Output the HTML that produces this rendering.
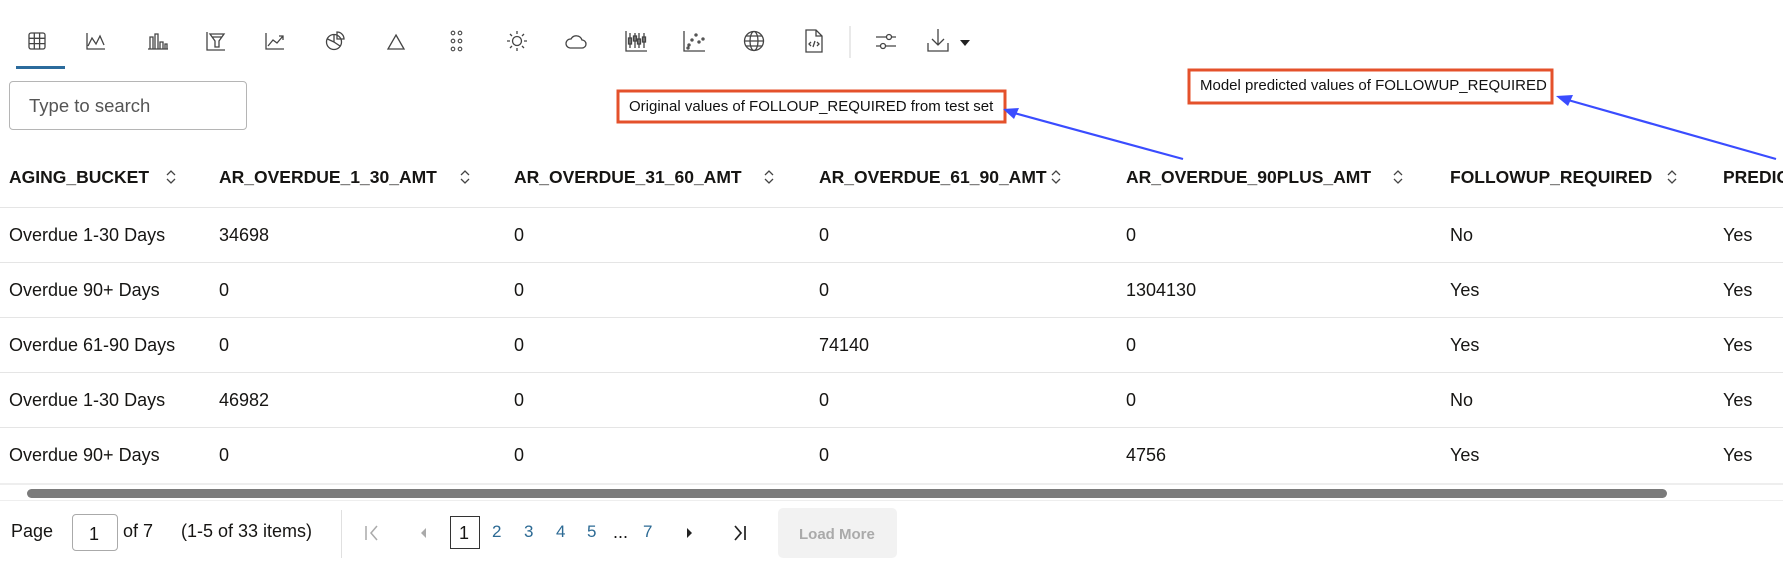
<!DOCTYPE html>
<html><head><meta charset="utf-8"><style>
*{margin:0;padding:0;box-sizing:border-box}
body{width:1783px;height:577px;background:#fff;font-family:"Liberation Sans",sans-serif;color:#161513;position:relative;overflow:hidden}
.a{position:absolute;white-space:nowrap}
.h{font-weight:bold;font-size:17.5px;top:167px}
.c{font-size:18px}
.s{position:absolute;top:169px;width:10px;height:16px}
.line{position:absolute;left:0;width:1783px;height:1px;background:#e5e5e5}
.pg{font-size:17px;top:522px;color:#2c6a94}
</style></head><body>
<svg style="position:absolute;left:0;top:0" width="1783" height="577" fill="none" stroke="#444" stroke-width="1.3">
<g transform="translate(29,33)"><rect x="0" y="0" width="16" height="16" rx="2"/><path d="M5.3 0v16M10.6 0v16M0 5.3h16M0 10.6h16"/></g>
<g transform="translate(87,33)"><path d="M0 0v16h18M1 13l4-8 4 6 4-8 4 9"/></g>
<g transform="translate(148,33)"><path d="M0 16h20M2 16V4h3v12M7 16V1h3v15M12 16V9h3v7M17 16v-5h2v5"/></g>
<g transform="translate(207,32)"><path d="M0 0v18h18M3 2h14l-5 7v6h-4V9z M5 5h10"/></g>
<g transform="translate(266,33)"><path d="M0 0v16h18M2 13l5-6 4 3 6-7M13 3h4v4"/></g>
<g transform="translate(326,32)"><circle cx="8" cy="10" r="7.5"/><path d="M8 2.5V10l6 4M8 10L1.5 7M11 0a7 7 0 0 1 7 7h-7z"/></g>
<g transform="translate(388,35)"><path d="M8 0L16 14H0z"/></g>
<g transform="translate(451,31)" stroke-width="1.1"><circle cx="2" cy="2" r="1.8"/><circle cx="9" cy="2" r="1.8"/><circle cx="2" cy="10" r="1.8"/><circle cx="9" cy="10" r="1.8"/><circle cx="2" cy="18" r="1.8"/><circle cx="9" cy="18" r="1.8"/></g>
<g transform="translate(507,31)"><circle cx="10" cy="10" r="4.5"/><path d="M10 0v3M10 17v3M0 10h3M17 10h3M3 3l2 2M15 15l2 2M3 17l2-2M15 5l2-2"/></g>
<g transform="translate(565,34)"><path d="M5 14h12a4 4 0 0 0 0-8 6 6 0 0 0-11-1A4.5 4.5 0 0 0 5 14z"/></g>
<g transform="translate(626,31)"><path d="M0 0v20h21M4 2v15M9 2v15M13 2v15M18 2v15"/><rect x="2.5" y="7" width="3" height="6"/><rect x="7.5" y="5" width="3" height="5"/><rect x="11.5" y="8" width="3" height="5"/><rect x="16.5" y="6" width="3" height="5"/></g>
<g transform="translate(684,31)"><path d="M0 0v20h21"/><circle cx="5" cy="14" r="1"/><circle cx="8" cy="9" r="1"/><circle cx="12" cy="4" r="1"/><circle cx="15" cy="11" r="1"/><circle cx="19" cy="8" r="1"/><circle cx="4" cy="17" r="1"/></g>
<g transform="translate(744,30)"><circle cx="10" cy="11" r="9.5"/><ellipse cx="10" cy="11" rx="4" ry="9.5"/><path d="M0.5 11h19M2 6h16M2 16h16"/></g>
<g transform="translate(806,30)"><path d="M0 0h10l6 6v16H0z M10 0v6h6M5 16l-2-2 2-2M11 12l2 2-2 2M9 11l-2 6"/></g>
<path d="M850 26v32" stroke="#ddd"/>
<g transform="translate(876,32)"><path d="M0 5h20M0 14h20"/><circle cx="13" cy="5" r="2.5" fill="#fff"/><circle cx="7" cy="14" r="2.5" fill="#fff"/></g>
<g transform="translate(928,29)"><path d="M10 0v15M4 10l6 6 6-6M0 14v8h20v-8"/></g>
<path d="M960 40h10l-5 6z" fill="#222" stroke="none"/>
<rect x="16" y="66" width="49" height="3" fill="#2b6b9c" stroke="none"/>
<rect x="618" y="91" width="387" height="31" stroke="#e4512b" stroke-width="3" fill="#fff"/>
<rect x="1189" y="70" width="363" height="33" stroke="#e4512b" stroke-width="3" fill="#fff"/>
<path d="M1183 159L1014 113" stroke="#3a4cff" stroke-width="2.2"/>
<path d="M1003 109l16-1-5 11z" fill="#3a4cff" stroke="none"/>
<path d="M1776 159L1568 100" stroke="#3a4cff" stroke-width="2.2"/>
<path d="M1556 96l17-1-5 11z" fill="#3a4cff" stroke="none"/>
</svg>
<div class="a" style="left:9px;top:81px;width:238px;height:49px;border:1px solid #b5b5b5;border-radius:4px"></div>
<div class="a" style="left:29px;top:95px;font-size:18.5px;color:#555">Type to search</div>
<div class="a" style="left:629px;top:98px;font-size:15px;color:#111">Original values of FOLLOUP_REQUIRED from test set</div>
<div class="a" style="left:1200px;top:77px;font-size:15px;color:#111">Model predicted values of FOLLOWUP_REQUIRED</div>

<div class="a h" style="left:9px">AGING_BUCKET</div>
<div class="a h" style="left:219px">AR_OVERDUE_1_30_AMT</div>
<div class="a h" style="left:514px">AR_OVERDUE_31_60_AMT</div>
<div class="a h" style="left:819px">AR_OVERDUE_61_90_AMT</div>
<div class="a h" style="left:1126px">AR_OVERDUE_90PLUS_AMT</div>
<div class="a h" style="left:1450px">FOLLOWUP_REQUIRED</div>
<div class="a h" style="left:1723px">PREDICTED</div>
<svg class="s" style="left:166px" viewBox="0 0 10 16" fill="none" stroke="#444" stroke-width="1.3"><path d="M1 6l4-4 4 4M1 10l4 4 4-4"/></svg>
<svg class="s" style="left:460px" viewBox="0 0 10 16" fill="none" stroke="#444" stroke-width="1.3"><path d="M1 6l4-4 4 4M1 10l4 4 4-4"/></svg>
<svg class="s" style="left:764px" viewBox="0 0 10 16" fill="none" stroke="#444" stroke-width="1.3"><path d="M1 6l4-4 4 4M1 10l4 4 4-4"/></svg>
<svg class="s" style="left:1051px" viewBox="0 0 10 16" fill="none" stroke="#444" stroke-width="1.3"><path d="M1 6l4-4 4 4M1 10l4 4 4-4"/></svg>
<svg class="s" style="left:1393px" viewBox="0 0 10 16" fill="none" stroke="#444" stroke-width="1.3"><path d="M1 6l4-4 4 4M1 10l4 4 4-4"/></svg>
<svg class="s" style="left:1667px" viewBox="0 0 10 16" fill="none" stroke="#444" stroke-width="1.3"><path d="M1 6l4-4 4 4M1 10l4 4 4-4"/></svg>
<div class="line" style="top:207px"></div>
<div class="line" style="top:262px"></div>
<div class="line" style="top:317px"></div>
<div class="line" style="top:372px"></div>
<div class="line" style="top:427px"></div>
<div class="line" style="top:483px;height:2px;background:#eee"></div>

<div class="a c" style="left:9px;top:225px">Overdue 1-30 Days</div><div class="a c" style="left:219px;top:225px">34698</div><div class="a c" style="left:514px;top:225px">0</div><div class="a c" style="left:819px;top:225px">0</div><div class="a c" style="left:1126px;top:225px">0</div><div class="a c" style="left:1450px;top:225px">No</div><div class="a c" style="left:1723px;top:225px">Yes</div>
<div class="a c" style="left:9px;top:280px">Overdue 90+ Days</div><div class="a c" style="left:219px;top:280px">0</div><div class="a c" style="left:514px;top:280px">0</div><div class="a c" style="left:819px;top:280px">0</div><div class="a c" style="left:1126px;top:280px">1304130</div><div class="a c" style="left:1450px;top:280px">Yes</div><div class="a c" style="left:1723px;top:280px">Yes</div>
<div class="a c" style="left:9px;top:335px">Overdue 61-90 Days</div><div class="a c" style="left:219px;top:335px">0</div><div class="a c" style="left:514px;top:335px">0</div><div class="a c" style="left:819px;top:335px">74140</div><div class="a c" style="left:1126px;top:335px">0</div><div class="a c" style="left:1450px;top:335px">Yes</div><div class="a c" style="left:1723px;top:335px">Yes</div>
<div class="a c" style="left:9px;top:390px">Overdue 1-30 Days</div><div class="a c" style="left:219px;top:390px">46982</div><div class="a c" style="left:514px;top:390px">0</div><div class="a c" style="left:819px;top:390px">0</div><div class="a c" style="left:1126px;top:390px">0</div><div class="a c" style="left:1450px;top:390px">No</div><div class="a c" style="left:1723px;top:390px">Yes</div>
<div class="a c" style="left:9px;top:445px">Overdue 90+ Days</div><div class="a c" style="left:219px;top:445px">0</div><div class="a c" style="left:514px;top:445px">0</div><div class="a c" style="left:819px;top:445px">0</div><div class="a c" style="left:1126px;top:445px">4756</div><div class="a c" style="left:1450px;top:445px">Yes</div><div class="a c" style="left:1723px;top:445px">Yes</div>

<div class="a" style="left:27px;top:489px;width:1640px;height:9px;border-radius:5px;background:#7b7b7b"></div>
<div class="a" style="left:0;top:500px;width:1783px;height:1px;background:#eee"></div>

<div class="a c" style="left:11px;top:521px">Page</div>
<div class="a" style="left:72px;top:514px;width:46px;height:37px;border:1px solid #aaa;border-radius:4px"></div>
<div class="a c" style="left:89px;top:524px">1</div>
<div class="a c" style="left:123px;top:521px">of 7</div>
<div class="a c" style="left:181px;top:521px">(1-5 of 33 items)</div>
<div class="a" style="left:341px;top:510px;width:1px;height:48px;background:#e0e0e0"></div>
<svg class="a" style="left:364px;top:525px" width="16" height="16" fill="none" stroke="#aaa" stroke-width="1.5"><path d="M2 1v14M13 1L7 8l6 7"/></svg>
<svg class="a" style="left:419px;top:527px" width="8" height="12"><path d="M7 1L2 6l5 5z" fill="#aaa"/></svg>
<div class="a" style="left:450px;top:516px;width:30px;height:33px;border:1.5px solid #333"></div>
<div class="a c" style="left:459px;top:523px">1</div>
<div class="a pg" style="left:492px">2</div>
<div class="a pg" style="left:524px">3</div>
<div class="a pg" style="left:556px">4</div>
<div class="a pg" style="left:587px">5</div>
<div class="a c" style="left:613px;top:522px">...</div>
<div class="a pg" style="left:643px">7</div>
<svg class="a" style="left:686px;top:527px" width="8" height="12"><path d="M1 1l5 5-5 5z" fill="#222"/></svg>
<svg class="a" style="left:732px;top:525px" width="16" height="16" fill="none" stroke="#222" stroke-width="1.7"><path d="M3 1l6 7-6 7M13 1v14"/></svg>
<div class="a" style="left:778px;top:508px;width:119px;height:50px;background:#f2f2f2;border-radius:5px"></div>
<div class="a" style="left:799px;top:526px;font-size:15px;font-weight:bold;color:#aaa">Load More</div>
</body></html>
